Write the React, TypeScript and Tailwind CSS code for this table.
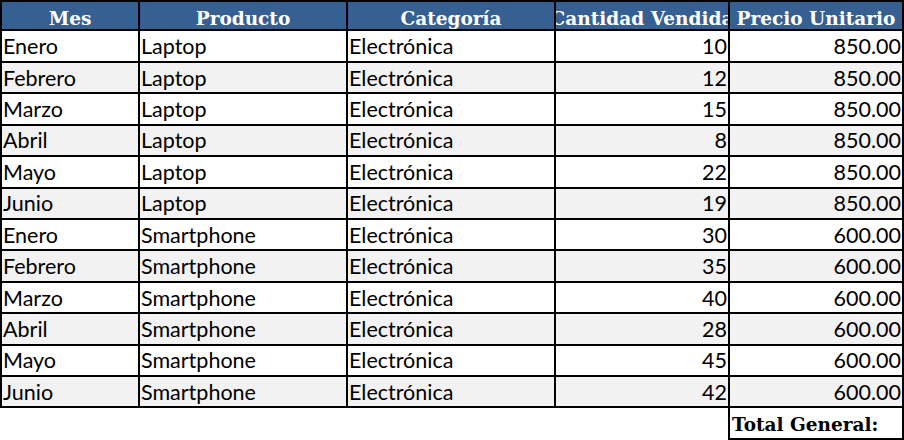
import React from 'react';

const rows: [string, string, string, number, string][] = [
  ['Enero', 'Laptop', 'Electrónica', 10, '850.00'],
  ['Febrero', 'Laptop', 'Electrónica', 12, '850.00'],
  ['Marzo', 'Laptop', 'Electrónica', 15, '850.00'],
  ['Abril', 'Laptop', 'Electrónica', 8, '850.00'],
  ['Mayo', 'Laptop', 'Electrónica', 22, '850.00'],
  ['Junio', 'Laptop', 'Electrónica', 19, '850.00'],
  ['Enero', 'Smartphone', 'Electrónica', 30, '600.00'],
  ['Febrero', 'Smartphone', 'Electrónica', 35, '600.00'],
  ['Marzo', 'Smartphone', 'Electrónica', 40, '600.00'],
  ['Abril', 'Smartphone', 'Electrónica', 28, '600.00'],
  ['Mayo', 'Smartphone', 'Electrónica', 45, '600.00'],
  ['Junio', 'Smartphone', 'Electrónica', 42, '600.00'],
];

const headers = ['Mes', 'Producto', 'Categoría', 'Cantidad Vendida', 'Precio Unitario'];

export default function App() {
  return (
    <div className="w-[904px] h-[440px] bg-white overflow-hidden">
      <div className="grid grid-cols-[140px_208px_208px_174px_174px] auto-rows-[31.43px] w-[904px]">
        {/* Header */}
        {headers.map((h, i) => (
          <div
            key={h}
            className={`flex items-center justify-center pt-[6px] overflow-hidden whitespace-nowrap bg-[#366092] text-white font-bold text-[18.5px] font-['DejaVu_Serif',serif] border-t-2 border-b-2 border-r-2 border-black ${i === 0 ? 'border-l-2' : ''}`}
          >
            {h}
          </div>
        ))}

        {/* Body */}
        {rows.map((r, ri) => {
          const bg = ri % 2 === 1 ? 'bg-[#f2f2f2]' : 'bg-white';
          const cell = `flex items-center whitespace-nowrap overflow-hidden text-black text-[21.5px] leading-[26px] font-['Lato','Noto_Sans',sans-serif] border-b-2 border-r-2 border-black ${bg}`;
          return (
            <React.Fragment key={ri}>
              <div className={`${cell} border-l-2 pl-[1px]`}>{r[0]}</div>
              <div className={`${cell} pl-[1px]`}>{r[1]}</div>
              <div className={`${cell} pl-[1px]`}>{r[2]}</div>
              <div className={`${cell} justify-end pr-[1px]`}>{r[3]}</div>
              <div className={`${cell} justify-end pr-[1px]`}>{r[4]}</div>
            </React.Fragment>
          );
        })}

        {/* Total */}
        <div className="col-start-5 -ml-[2px] flex items-center pl-[2px] pt-[3px] whitespace-nowrap overflow-hidden font-bold text-[18.5px] font-['DejaVu_Serif',serif] text-black border-b-2 border-r-2 border-l-2 border-black">
          Total General:
        </div>
      </div>
    </div>
  );
}
